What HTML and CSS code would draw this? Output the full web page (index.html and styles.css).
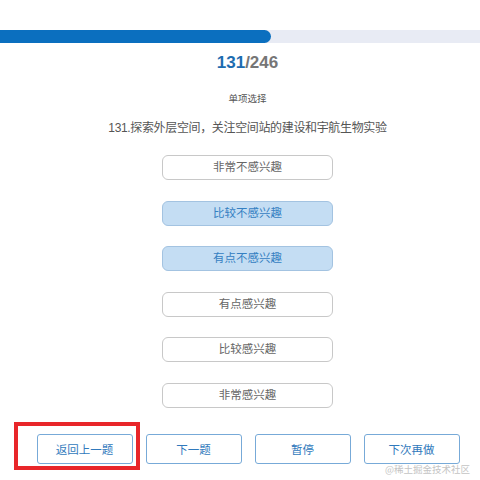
FILE: index.html
```html
<!DOCTYPE html>
<html lang="zh-CN">
<head>
<meta charset="utf-8">
<link rel="stylesheet" href="styles.css">
</head>
<body>
<div class="page">
  <div class="progress"><div class="progress-fill" style="width:56.5%"></div></div>
  <div class="content">
    <div class="counter"><span class="cur">131</span>/246</div>
    <div class="qtype">单项选择</div>
    <div class="question">131.探索外层空间，关注空间站的建设和宇航生物实验</div>
    <div class="options">
      <div class="option">非常不感兴趣</div>
      <div class="option selected">比较不感兴趣</div>
      <div class="option selected">有点不感兴趣</div>
      <div class="option">有点感兴趣</div>
      <div class="option">比较感兴趣</div>
      <div class="option">非常感兴趣</div>
    </div>
    <div class="actions">
      <button class="btn btn-marked">返回上一题</button>
      <button class="btn">下一题</button>
      <button class="btn">暂停</button>
      <button class="btn">下次再做</button>
    </div>
  </div>
  <div class="watermark">@稀土掘金技术社区</div>
</div>
</body>
</html>
```
FILE: styles.css
```css
html, body {
  margin: 0;
  padding: 0;
  background: #ffffff;
}
body {
  font-family: "Liberation Sans", "Noto Sans CJK SC", sans-serif;
}
.page {
  position: relative;
  width: 480px;
  height: 480px;
  overflow: hidden;
  padding-top: 30px;
  box-sizing: border-box;
}
.progress {
  height: 13px;
  background: #e8ebf4;
}
.progress-fill {
  height: 100%;
  background: #0b6fbf;
  border-radius: 0 7px 7px 0;
}
.content {
  padding-left: 15px;
  display: flex;
  flex-direction: column;
  align-items: center;
}
.counter {
  margin-top: 10px;
  font-size: 17px;
  line-height: 20px;
  font-weight: bold;
  color: #767676;
}
.counter .cur {
  color: #1d6cb0;
}
.qtype {
  margin-top: 20px;
  font-size: 9.5px;
  line-height: 12px;
  color: #555;
}
.question {
  margin-top: 15px;
  font-size: 12px;
  line-height: 16px;
  color: #555;
  letter-spacing: -0.35px;
}
.options {
  margin-top: 19px;
  display: flex;
  flex-direction: column;
  gap: 20.6px;
}
.option {
  box-sizing: border-box;
  width: 171px;
  height: 25px;
  border: 1px solid #c8c8c8;
  border-radius: 6px;
  font-size: 11.5px;
  line-height: 23px;
  text-align: center;
  color: #666;
  background: #fff;
}
.option.selected {
  background: #c4ddf3;
  border-color: #a3c3e1;
  color: #3580c2;
}
.actions {
  margin-top: 26px;
  display: flex;
  gap: 13px;
  padding-left: 1px;
}
.btn {
  position: relative;
  box-sizing: border-box;
  width: 96px;
  height: 30px;
  padding: 0;
  border: 1px solid #77aad8;
  border-radius: 3px;
  background: #fff;
  color: #3079bc;
  font-family: "Liberation Sans", "Noto Sans CJK SC", sans-serif;
  font-size: 11.5px;
}
.btn-marked::after {
  content: "";
  position: absolute;
  left: -24px;
  top: -13px;
  width: 126px;
  height: 48px;
  box-sizing: border-box;
  border: 4px solid #e8262a;
}
.watermark {
  position: absolute;
  right: 10px;
  bottom: 4px;
  font-family: "Noto Sans CJK SC", sans-serif;
  font-size: 9.5px;
  color: #c4c4c4;
}
```
